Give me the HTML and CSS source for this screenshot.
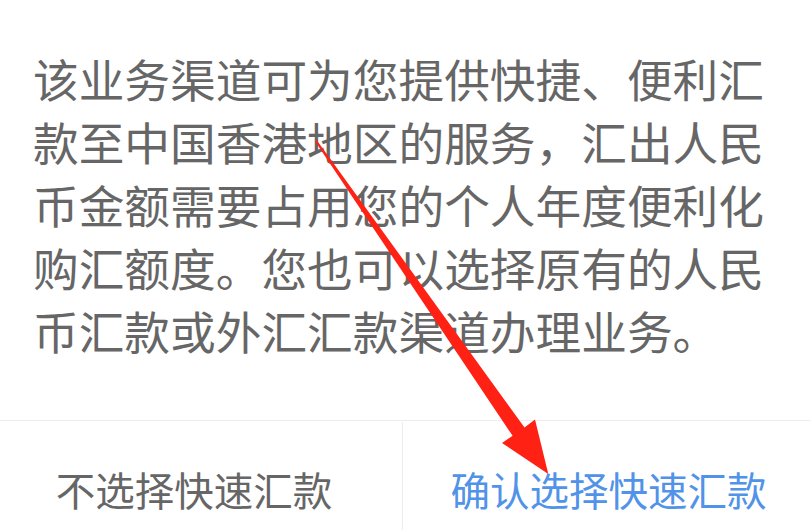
FILE: index.html
```html
<!DOCTYPE html>
<html lang="zh-CN">
<head>
<meta charset="utf-8">
<title>快速汇款</title>
<link rel="stylesheet" href="styles.css">
</head>
<body>
<div class="dialog">
  <div class="message">该业务渠道可为您提供快捷、便利汇款至中国香港地区的服务，汇出人民币金额需要占用您的个人年度便利化购汇额度。您也可以选择原有的人民币汇款或外汇汇款渠道办理业务。</div>
  <div class="actions">
    <div class="btn btn-cancel">不选择快速汇款</div>
    <div class="btn btn-confirm">确认选择快速汇款</div>
  </div>
</div>
<svg class="arrow" width="810" height="530" viewBox="0 0 810 530" xmlns="http://www.w3.org/2000/svg">
  <polygon fill="#ff2114" points="316.8,140.2 524.5,427.5 535,419.5 548.3,474 502,443 512.6,435.8 315.2,141.6"/>
</svg>
</body>
</html>
```

FILE: styles.css
```css
html, body {
  margin: 0;
  padding: 0;
  background: #ffffff;
  width: 810px;
  height: 530px;
  overflow: hidden;
  position: relative;
}

.dialog {
  margin-left: -14px;
  width: 828px;
  background: #ffffff;
  font-family: "Noto Sans CJK SC", "Noto Sans", sans-serif;
}

.message {
  padding: 47px 43px 58px 47px;
  font-size: 45.7px;
  line-height: 63px;
  color: #666666;
}

.actions {
  display: grid;
  grid-template-columns: 416px 1fr;
  border-top: 1px solid #ececec;
  padding-top: 1px;
}

.btn {
  height: 84px;
  padding-top: 24px;
  display: flex;
  align-items: center;
  justify-content: center;
  font-size: 39.5px;
}

.btn-cancel {
  color: #666666;
}

.btn-confirm {
  color: #5193e8;
  border-left: 1px solid #ececec;
}

.arrow {
  position: absolute;
  left: 0;
  top: 0;
}
```
